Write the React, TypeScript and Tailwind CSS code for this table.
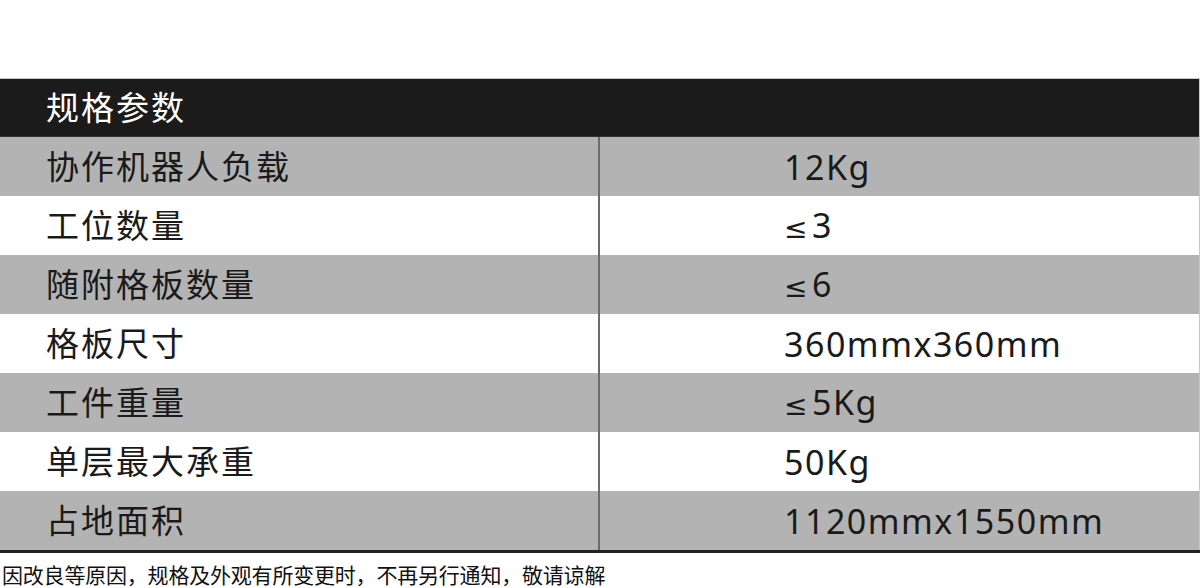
const rows = [
  { name: "协作机器人负载", value: "12Kg" },
  { name: "工位数量", value: "3", le: true },
  { name: "随附格板数量", value: "6", le: true },
  { name: "格板尺寸", value: "360mmx360mm" },
  { name: "工件重量", value: "5Kg", le: true },
  { name: "单层最大承重", value: "50Kg" },
  { name: "占地面积", value: "1120mmx1550mm" },
];

export default function App() {
  return (
    <main
      className="w-[1200px] h-[588px] bg-white overflow-hidden pt-[78px]"
      style={{ fontFamily: '"Noto Sans", "Noto Sans CJK SC", sans-serif' }}
    >
      <section className="border-t border-r border-[#c8c8c8]">
        {/* 表头 */}
        <div className="h-[58px] bg-[#1b1b1b] border-b border-[#333333] flex items-center pl-[46px]">
          <h1 className="text-[33px] tracking-[2px] text-white leading-none">规格参数</h1>
        </div>

        {rows.map((row, i) => (
          <div
            key={row.name}
            className={
              i % 2 === 0
                ? "h-[59px] flex bg-[#b3b3b3] text-[#1a1a1a]"
                : "h-[59px] flex bg-white text-[#1a1a1a]"
            }
          >
            <div className="w-[600px] border-r-2 border-[#6b6b6b] flex items-center pl-[46px]">
              <span className="text-[33px] tracking-[2px] leading-none">{row.name}</span>
            </div>
            <div className="flex-1 flex items-center pl-[184px]">
              <span className="text-[34px] tracking-[1.5px] leading-none">
                {row.le && (
                  <span className="text-[28px] mr-[3px] font-['DejaVu_Sans']">≤</span>
                )}
                {row.value}
              </span>
            </div>
          </div>
        ))}
      </section>

      <div className="h-[3px] bg-[#222222]" />

      <p className="mt-[9px] pl-[2px] text-[21px] tracking-[-0.2px] leading-[26px] text-[#111111]">
        因改良等原因，规格及外观有所变更时，不再另行通知，敬请谅解
      </p>
    </main>
  );
}
